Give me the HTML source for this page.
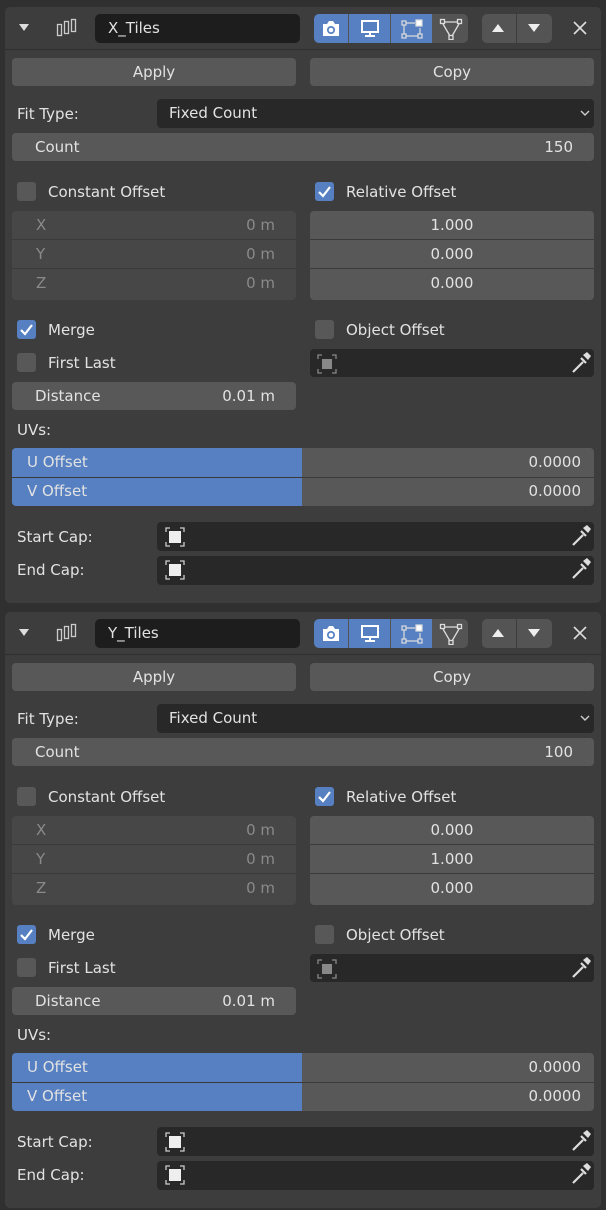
<!DOCTYPE html>
<html><head><meta charset="utf-8"><style>
*{box-sizing:border-box;margin:0;padding:0}
body{width:606px;height:1196px;background:#303030;position:relative;overflow:hidden;font-family:"DejaVu Sans","Liberation Sans",sans-serif;font-size:15px;color:#e2e2e2}
.p{position:absolute;left:0;width:606px;height:605px}
.a{position:absolute}
.panel{left:5px;top:7px;width:596px;height:596px;background:#3d3d3d;border-radius:5px}
.hl{left:5px;top:49px;width:596px;height:1px;background:#2f2f2f}
.btn{background:#585858;border-radius:4px;height:28px;line-height:28px;text-align:center}
.dark{background:#282828;border-radius:4px;height:29px;line-height:29px}
.cb{width:19px;height:19px;border-radius:3px;background:#585858}
.cb.on{background:#5680c2}
.lbl{line-height:20px}
.row{height:29px;line-height:29px}
</style></head><body>

<div class="p" style="top:0">
<div class="a panel"></div><div class="a hl"></div>
<svg class="a" style="left:18px;top:21px" width="12" height="12"><path d="M1 3h10L6 10z" fill="#ddd"/></svg>
<svg class="a" style="left:56px;top:18px" width="22" height="20" fill="none" stroke="#ccc" stroke-width="1.3"><rect x="1.5" y="6.5" width="4" height="11"/><rect x="8.5" y="3.5" width="4" height="12"/><rect x="15.5" y="1.5" width="4" height="12"/></svg>
<div class="a" style="left:95px;top:14px;width:205px;height:29px;background:#1d1d1d;border-radius:5px;padding-left:13px;line-height:29px">X_Tiles</div>
<div class="a" style="left:314px;top:14px;width:154px;height:29px;border-radius:5px;overflow:hidden;background:#545454">
<div class="a" style="left:0;top:0;width:34px;height:29px;background:#5680c2"></div>
<div class="a" style="left:35px;top:0;width:41px;height:29px;background:#5680c2"></div>
<div class="a" style="left:77px;top:0;width:41px;height:29px;background:#5680c2"></div>
<svg class="a" style="left:7px;top:5px" width="20" height="19"><path d="M2 5h4l2-3h4l2 3h4v12H2z" fill="#fff"/><circle cx="10" cy="11" r="4" fill="#5680c2"/><circle cx="10" cy="11" r="2.3" fill="#fff"/></svg>
<svg class="a" style="left:45px;top:5px" width="22" height="19"><rect x="3" y="2" width="16" height="11" fill="none" stroke="#fff" stroke-width="2"/><path d="M11 13v3M6 17h10" stroke="#fff" stroke-width="2"/></svg>
<svg class="a" style="left:86px;top:5px" width="24" height="20" fill="none" stroke="#ddd" stroke-width="1.2"><path d="M6 4h9M4 6v9M6 17h12M20 9v6"/><rect x="2" y="2" width="4" height="4"/><rect x="2" y="15" width="4" height="4"/><rect x="18" y="15" width="4" height="4"/><rect x="16" y="1" width="6" height="6" fill="#fff"/></svg>
<svg class="a" style="left:125px;top:4px" width="24" height="22" fill="none" stroke="#ddd" stroke-width="1.3"><path d="M6 4h12M4 6l7 12M20 6l-7 12"/><rect x="1.5" y="1.5" width="4" height="4"/><rect x="18.5" y="1.5" width="4" height="4"/><rect x="10" y="17.5" width="4" height="4"/></svg>
</div>
<div class="a" style="left:482px;top:14px;width:70px;height:29px;border-radius:5px;background:#545454"></div>
<div class="a" style="left:516px;top:14px;width:1px;height:29px;background:#3d3d3d"></div>
<svg class="a" style="left:490px;top:22px" width="16" height="12"><path d="M2 10h12L8 2z" fill="#eee"/></svg>
<svg class="a" style="left:526px;top:22px" width="16" height="12"><path d="M2 2h12L8 10z" fill="#eee"/></svg>
<svg class="a" style="left:572px;top:20px" width="16" height="16"><path d="M2 2l12 12M14 2L2 14" stroke="#ddd" stroke-width="1.6"/></svg>

<div class="a btn" style="left:12px;top:58px;width:284px">Apply</div>
<div class="a btn" style="left:310px;top:58px;width:284px">Copy</div>

<div class="a lbl" style="left:17px;top:104px">Fit Type:</div>
<div class="a dark" style="left:157px;top:99px;width:437px;padding-left:12px">Fixed Count</div>
<svg class="a" style="left:580px;top:109px" width="10" height="8"><path d="M1 2l4 4 4-4" stroke="#ccc" fill="none" stroke-width="1.4"/></svg>
<div class="a btn" style="left:12px;top:133px;width:582px;text-align:left;padding:0 21px 0 23px">Count<span style="float:right">150</span></div>

<div class="a cb" style="left:17px;top:182px"></div><div class="a lbl" style="left:48px;top:182px">Constant Offset</div>
<div class="a cb on" style="left:315px;top:182px"></div>
<svg class="a" style="left:317px;top:184px" width="15" height="15"><path d="M2 8l4 4 7-9" stroke="#fff" stroke-width="2.2" fill="none"/></svg>
<div class="a lbl" style="left:346px;top:182px">Relative Offset</div>

<div class="a" style="left:12px;top:211px;width:284px;height:89px;background:#474747;border-radius:4px;color:#8a8a8a">
<div class="row" style="padding:0 21px 0 24px;border-bottom:1px solid #3a3a3a">X<span style="float:right">0 m</span></div>
<div class="row" style="padding:0 21px 0 24px;border-bottom:1px solid #3a3a3a">Y<span style="float:right">0 m</span></div>
<div class="row" style="padding:0 21px 0 24px">Z<span style="float:right">0 m</span></div></div>
<div class="a" style="left:310px;top:211px;width:284px;height:89px;background:#585858;border-radius:4px;text-align:center">
<div class="row" style="border-bottom:1px solid #3a3a3a">1.000</div>
<div class="row" style="border-bottom:1px solid #3a3a3a">0.000</div>
<div class="row">0.000</div></div>

<div class="a cb on" style="left:17px;top:320px"></div>
<svg class="a" style="left:19px;top:322px" width="15" height="15"><path d="M2 8l4 4 7-9" stroke="#fff" stroke-width="2.2" fill="none"/></svg>
<div class="a lbl" style="left:48px;top:320px">Merge</div>
<div class="a cb" style="left:315px;top:320px"></div><div class="a lbl" style="left:346px;top:320px">Object Offset</div>
<div class="a cb" style="left:17px;top:353px"></div><div class="a lbl" style="left:48px;top:353px">First Last</div>
<div class="a dark" style="left:310px;top:349px;width:284px;height:28px"></div>
<svg class="a" style="left:316px;top:353px" width="22" height="22" fill="none" stroke="#888" stroke-width="1.3"><path d="M2 6V2h4M16 2h4v4M20 16v4h-4M6 20H2v-4"/><rect x="6" y="6" width="10" height="10" fill="#888" stroke="none"/></svg>
<svg class="a" style="left:569px;top:351px" width="22" height="24"><path d="M4 21l10-10M12 7l5 5" stroke="#ddd" stroke-width="2.2"/><path d="M14 4l4-3 4 4-3 4z" fill="#ddd"/></svg>
<div class="a btn" style="left:12px;top:382px;width:284px;text-align:left;padding:0 21px 0 23px">Distance<span style="float:right">0.01 m</span></div>

<div class="a lbl" style="left:17px;top:420px">UVs:</div>
<div class="a" style="left:12px;top:448px;width:582px;height:58px;background:#585858;border-radius:4px;overflow:hidden">
<div class="a" style="left:0;top:0;width:290px;height:58px;background:#5680c2"></div>
<div class="a" style="left:0;top:29px;width:582px;height:1px;background:#3a3a3a"></div>
<div class="a row" style="left:15px;top:0">U Offset</div><div class="a row" style="right:13px;top:0">0.0000</div>
<div class="a row" style="left:15px;top:29px">V Offset</div><div class="a row" style="right:13px;top:29px">0.0000</div></div>

<div class="a lbl" style="left:17px;top:527px">Start Cap:</div>
<div class="a dark" style="left:157px;top:522px;width:437px"></div>
<svg class="a" style="left:164px;top:526px" width="22" height="22" fill="none" stroke="#ccc" stroke-width="1.3"><path d="M2 6V2h4M16 2h4v4M20 16v4h-4M6 20H2v-4"/><rect x="5" y="5" width="12" height="12" fill="#eee" stroke="none"/></svg>
<svg class="a" style="left:569px;top:524px" width="22" height="24"><path d="M4 21l10-10M12 7l5 5" stroke="#ddd" stroke-width="2.2"/><path d="M14 4l4-3 4 4-3 4z" fill="#ddd"/></svg>
<div class="a lbl" style="left:17px;top:560px">End Cap:</div>
<div class="a dark" style="left:157px;top:556px;width:437px"></div>
<svg class="a" style="left:164px;top:559px" width="22" height="22" fill="none" stroke="#ccc" stroke-width="1.3"><path d="M2 6V2h4M16 2h4v4M20 16v4h-4M6 20H2v-4"/><rect x="5" y="5" width="12" height="12" fill="#eee" stroke="none"/></svg>
<svg class="a" style="left:569px;top:557px" width="22" height="24"><path d="M4 21l10-10M12 7l5 5" stroke="#ddd" stroke-width="2.2"/><path d="M14 4l4-3 4 4-3 4z" fill="#ddd"/></svg>
</div>

<div class="p" style="top:605px">
<div class="a panel"></div><div class="a hl"></div>
<svg class="a" style="left:18px;top:21px" width="12" height="12"><path d="M1 3h10L6 10z" fill="#ddd"/></svg>
<svg class="a" style="left:56px;top:18px" width="22" height="20" fill="none" stroke="#ccc" stroke-width="1.3"><rect x="1.5" y="6.5" width="4" height="11"/><rect x="8.5" y="3.5" width="4" height="12"/><rect x="15.5" y="1.5" width="4" height="12"/></svg>
<div class="a" style="left:95px;top:14px;width:205px;height:29px;background:#1d1d1d;border-radius:5px;padding-left:13px;line-height:29px">Y_Tiles</div>
<div class="a" style="left:314px;top:14px;width:154px;height:29px;border-radius:5px;overflow:hidden;background:#545454">
<div class="a" style="left:0;top:0;width:34px;height:29px;background:#5680c2"></div>
<div class="a" style="left:35px;top:0;width:41px;height:29px;background:#5680c2"></div>
<div class="a" style="left:77px;top:0;width:41px;height:29px;background:#5680c2"></div>
<svg class="a" style="left:7px;top:5px" width="20" height="19"><path d="M2 5h4l2-3h4l2 3h4v12H2z" fill="#fff"/><circle cx="10" cy="11" r="4" fill="#5680c2"/><circle cx="10" cy="11" r="2.3" fill="#fff"/></svg>
<svg class="a" style="left:45px;top:5px" width="22" height="19"><rect x="3" y="2" width="16" height="11" fill="none" stroke="#fff" stroke-width="2"/><path d="M11 13v3M6 17h10" stroke="#fff" stroke-width="2"/></svg>
<svg class="a" style="left:86px;top:5px" width="24" height="20" fill="none" stroke="#ddd" stroke-width="1.2"><path d="M6 4h9M4 6v9M6 17h12M20 9v6"/><rect x="2" y="2" width="4" height="4"/><rect x="2" y="15" width="4" height="4"/><rect x="18" y="15" width="4" height="4"/><rect x="16" y="1" width="6" height="6" fill="#fff"/></svg>
<svg class="a" style="left:125px;top:4px" width="24" height="22" fill="none" stroke="#ddd" stroke-width="1.3"><path d="M6 4h12M4 6l7 12M20 6l-7 12"/><rect x="1.5" y="1.5" width="4" height="4"/><rect x="18.5" y="1.5" width="4" height="4"/><rect x="10" y="17.5" width="4" height="4"/></svg>
</div>
<div class="a" style="left:482px;top:14px;width:70px;height:29px;border-radius:5px;background:#545454"></div>
<div class="a" style="left:516px;top:14px;width:1px;height:29px;background:#3d3d3d"></div>
<svg class="a" style="left:490px;top:22px" width="16" height="12"><path d="M2 10h12L8 2z" fill="#eee"/></svg>
<svg class="a" style="left:526px;top:22px" width="16" height="12"><path d="M2 2h12L8 10z" fill="#eee"/></svg>
<svg class="a" style="left:572px;top:20px" width="16" height="16"><path d="M2 2l12 12M14 2L2 14" stroke="#ddd" stroke-width="1.6"/></svg>

<div class="a btn" style="left:12px;top:58px;width:284px">Apply</div>
<div class="a btn" style="left:310px;top:58px;width:284px">Copy</div>

<div class="a lbl" style="left:17px;top:104px">Fit Type:</div>
<div class="a dark" style="left:157px;top:99px;width:437px;padding-left:12px">Fixed Count</div>
<svg class="a" style="left:580px;top:109px" width="10" height="8"><path d="M1 2l4 4 4-4" stroke="#ccc" fill="none" stroke-width="1.4"/></svg>
<div class="a btn" style="left:12px;top:133px;width:582px;text-align:left;padding:0 21px 0 23px">Count<span style="float:right">100</span></div>

<div class="a cb" style="left:17px;top:182px"></div><div class="a lbl" style="left:48px;top:182px">Constant Offset</div>
<div class="a cb on" style="left:315px;top:182px"></div>
<svg class="a" style="left:317px;top:184px" width="15" height="15"><path d="M2 8l4 4 7-9" stroke="#fff" stroke-width="2.2" fill="none"/></svg>
<div class="a lbl" style="left:346px;top:182px">Relative Offset</div>

<div class="a" style="left:12px;top:211px;width:284px;height:89px;background:#474747;border-radius:4px;color:#8a8a8a">
<div class="row" style="padding:0 21px 0 24px;border-bottom:1px solid #3a3a3a">X<span style="float:right">0 m</span></div>
<div class="row" style="padding:0 21px 0 24px;border-bottom:1px solid #3a3a3a">Y<span style="float:right">0 m</span></div>
<div class="row" style="padding:0 21px 0 24px">Z<span style="float:right">0 m</span></div></div>
<div class="a" style="left:310px;top:211px;width:284px;height:89px;background:#585858;border-radius:4px;text-align:center">
<div class="row" style="border-bottom:1px solid #3a3a3a">0.000</div>
<div class="row" style="border-bottom:1px solid #3a3a3a">1.000</div>
<div class="row">0.000</div></div>

<div class="a cb on" style="left:17px;top:320px"></div>
<svg class="a" style="left:19px;top:322px" width="15" height="15"><path d="M2 8l4 4 7-9" stroke="#fff" stroke-width="2.2" fill="none"/></svg>
<div class="a lbl" style="left:48px;top:320px">Merge</div>
<div class="a cb" style="left:315px;top:320px"></div><div class="a lbl" style="left:346px;top:320px">Object Offset</div>
<div class="a cb" style="left:17px;top:353px"></div><div class="a lbl" style="left:48px;top:353px">First Last</div>
<div class="a dark" style="left:310px;top:349px;width:284px;height:28px"></div>
<svg class="a" style="left:316px;top:353px" width="22" height="22" fill="none" stroke="#888" stroke-width="1.3"><path d="M2 6V2h4M16 2h4v4M20 16v4h-4M6 20H2v-4"/><rect x="6" y="6" width="10" height="10" fill="#888" stroke="none"/></svg>
<svg class="a" style="left:569px;top:351px" width="22" height="24"><path d="M4 21l10-10M12 7l5 5" stroke="#ddd" stroke-width="2.2"/><path d="M14 4l4-3 4 4-3 4z" fill="#ddd"/></svg>
<div class="a btn" style="left:12px;top:382px;width:284px;text-align:left;padding:0 21px 0 23px">Distance<span style="float:right">0.01 m</span></div>

<div class="a lbl" style="left:17px;top:420px">UVs:</div>
<div class="a" style="left:12px;top:448px;width:582px;height:58px;background:#585858;border-radius:4px;overflow:hidden">
<div class="a" style="left:0;top:0;width:290px;height:58px;background:#5680c2"></div>
<div class="a" style="left:0;top:29px;width:582px;height:1px;background:#3a3a3a"></div>
<div class="a row" style="left:15px;top:0">U Offset</div><div class="a row" style="right:13px;top:0">0.0000</div>
<div class="a row" style="left:15px;top:29px">V Offset</div><div class="a row" style="right:13px;top:29px">0.0000</div></div>

<div class="a lbl" style="left:17px;top:527px">Start Cap:</div>
<div class="a dark" style="left:157px;top:522px;width:437px"></div>
<svg class="a" style="left:164px;top:526px" width="22" height="22" fill="none" stroke="#ccc" stroke-width="1.3"><path d="M2 6V2h4M16 2h4v4M20 16v4h-4M6 20H2v-4"/><rect x="5" y="5" width="12" height="12" fill="#eee" stroke="none"/></svg>
<svg class="a" style="left:569px;top:524px" width="22" height="24"><path d="M4 21l10-10M12 7l5 5" stroke="#ddd" stroke-width="2.2"/><path d="M14 4l4-3 4 4-3 4z" fill="#ddd"/></svg>
<div class="a lbl" style="left:17px;top:560px">End Cap:</div>
<div class="a dark" style="left:157px;top:556px;width:437px"></div>
<svg class="a" style="left:164px;top:559px" width="22" height="22" fill="none" stroke="#ccc" stroke-width="1.3"><path d="M2 6V2h4M16 2h4v4M20 16v4h-4M6 20H2v-4"/><rect x="5" y="5" width="12" height="12" fill="#eee" stroke="none"/></svg>
<svg class="a" style="left:569px;top:557px" width="22" height="24"><path d="M4 21l10-10M12 7l5 5" stroke="#ddd" stroke-width="2.2"/><path d="M14 4l4-3 4 4-3 4z" fill="#ddd"/></svg>
</div>
</body></html>
